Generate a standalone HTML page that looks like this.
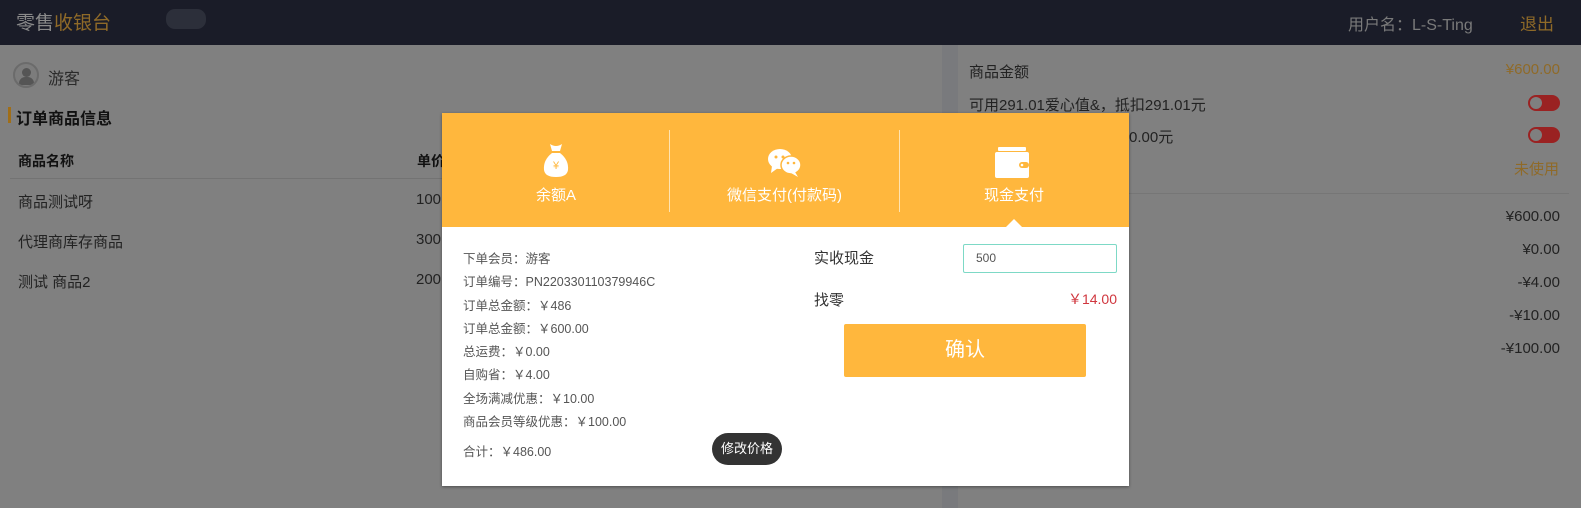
<!DOCTYPE html>
<html><head><meta charset="utf-8"><style>
*{margin:0;padding:0;box-sizing:border-box}
body{width:1581px;height:508px;overflow:hidden;background:#808080;font-family:"Liberation Sans","Noto Sans CJK SC",sans-serif;position:relative}
.a{position:absolute;white-space:nowrap}
.hdr{position:absolute;left:0;top:0;width:1581px;height:45px;background:#1a1c28}
.t{font-size:15px;color:#222}
.r{text-align:right}
</style></head><body>
<div class="hdr"></div>
<div class="a" style="left:16px;top:8px;font-size:19px;color:#8a8a8a">零售<span style="color:#8f6a28">收银台</span></div>
<div class="a" style="left:166px;top:9px;width:40px;height:20px;border-radius:9px;background:#2c2f3a"></div>
<div class="a" style="left:1348px;top:11px;font-size:16px;color:#7a7a7a">用户名：L-S-Ting</div>
<div class="a" style="left:1520px;top:10px;font-size:17px;color:#8f6a28">退出</div>
<!-- strip -->
<div class="a" style="left:942px;top:45px;width:16px;height:463px;background:#797a7d"></div>
<!-- left -->
<div class="a" style="left:13px;top:62px;width:26px;height:26px;border-radius:50%;border:2px solid #6b6b6b;background:#7c7c7c;overflow:hidden">
<div style="position:absolute;left:7px;top:4px;width:9px;height:9px;border-radius:50%;background:#555"></div>
<div style="position:absolute;left:4px;top:13px;width:15px;height:8px;border-radius:7px 7px 2px 2px;background:#555"></div></div>
<div class="a" style="left:48px;top:65px;font-size:16px;color:#2a2a2a">游客</div>
<div class="a" style="left:8px;top:107px;width:3px;height:16px;background:#a06e18"></div>
<div class="a" style="left:16px;top:105px;font-size:16px;font-weight:bold;color:#111">订单商品信息</div>
<div class="a" style="left:18px;top:151px;font-size:14px;font-weight:bold;color:#111">商品名称</div>
<div class="a" style="left:417px;top:151px;font-size:14px;font-weight:bold;color:#111">单价</div>
<div class="a" style="left:10px;top:178px;width:440px;height:1px;background:#737373"></div>
<div class="a t" style="left:18px;top:191px">商品测试呀</div><div class="a t" style="left:416px;top:191px">100</div>
<div class="a t" style="left:18px;top:231px">代理商库存商品</div><div class="a t" style="left:416px;top:231px">300</div>
<div class="a t" style="left:18px;top:271px">测试 商品2</div><div class="a t" style="left:416px;top:271px">200</div>
<!-- right -->
<div class="a" style="left:969px;top:61px;font-size:15px;color:#222">商品金额</div>
<div class="a" style="left:1500px;top:61px;font-size:15px;color:#8f6a28;width:60px;text-align:right">¥600.00</div>
<div class="a" style="left:969px;top:94px;font-size:15px;color:#222">可用291.01爱心值&amp;，抵扣291.01元</div>
<div class="a" style="left:1129px;top:126px;font-size:15px;color:#222">0.00元</div>
<div class="a" style="left:1528px;top:95px;width:32px;height:16px;border-radius:8px;background:#9a2222"><div style="position:absolute;left:2px;top:2px;width:12px;height:12px;border-radius:50%;background:#7f7f7f"></div></div>
<div class="a" style="left:1528px;top:127px;width:32px;height:16px;border-radius:8px;background:#9a2222"><div style="position:absolute;left:2px;top:2px;width:12px;height:12px;border-radius:50%;background:#7f7f7f"></div></div>
<div class="a" style="left:1514px;top:158px;font-size:15px;color:#8f6a28">未使用</div>
<div class="a" style="left:1129px;top:193px;width:440px;height:1px;background:#767676"></div>
<div class="a r" style="left:1460px;top:208px;width:100px;font-size:15px;color:#222">¥600.00</div>
<div class="a r" style="left:1460px;top:241px;width:100px;font-size:15px;color:#222">¥0.00</div>
<div class="a r" style="left:1460px;top:274px;width:100px;font-size:15px;color:#222">-¥4.00</div>
<div class="a r" style="left:1460px;top:307px;width:100px;font-size:15px;color:#222">-¥10.00</div>
<div class="a r" style="left:1460px;top:340px;width:100px;font-size:15px;color:#222">-¥100.00</div>
<!-- modal -->
<div class="a" style="left:442px;top:113px;width:687px;height:373px;background:#fff;box-shadow:0 1px 3px rgba(0,0,0,.4)"></div>
<div class="a" style="left:442px;top:113px;width:687px;height:114px;background:#ffb73d"></div>
<div class="a" style="left:669px;top:130px;width:1px;height:82px;background:#ffe3b0"></div>
<div class="a" style="left:899px;top:130px;width:1px;height:82px;background:#ffe3b0"></div>
<div class="a" style="left:1006px;top:219px;width:0;height:0;border-left:8px solid transparent;border-right:8px solid transparent;border-bottom:8px solid #fff"></div>
<!-- icons -->
<svg class="a" style="left:541px;top:142px" width="30" height="36" viewBox="0 0 30 36"><path d="M9 2 Q15 6 21 2 L19 9 L11 9 Z" fill="#fff"/><path d="M11 11 L19 11 Q28 18 27 28 Q26 35 15 35 Q4 35 3 28 Q2 18 11 11Z" fill="#fff"/><text x="15" y="27" font-size="11" fill="#ffb73d" text-anchor="middle" font-family="Liberation Sans">¥</text></svg>
<svg class="a" style="left:767px;top:148px" width="36" height="30" viewBox="0 0 36 30"><ellipse cx="13" cy="11" rx="12" ry="10" fill="#fff"/><path d="M5 18 L4 25 L11 20Z" fill="#fff"/><ellipse cx="24" cy="17" rx="10" ry="9" fill="#fff" stroke="#ffb73d" stroke-width="1.5"/><path d="M28 24 L31 29 L24 25Z" fill="#fff"/><circle cx="9" cy="9" r="1.5" fill="#ffb73d"/><circle cx="16" cy="9" r="1.5" fill="#ffb73d"/><circle cx="21" cy="15" r="1.3" fill="#ffb73d"/><circle cx="27" cy="15" r="1.3" fill="#ffb73d"/></svg>
<svg class="a" style="left:995px;top:146px" width="34" height="32" viewBox="0 0 34 32"><rect x="3" y="1" width="28" height="4" rx="1" fill="#fff"/><rect x="0" y="6" width="34" height="26" rx="2" fill="#fff"/><rect x="24" y="16" width="10" height="6" rx="3" fill="#ffb73d"/><circle cx="27" cy="19" r="1.3" fill="#fff"/></svg>
<div class="a" style="left:442px;top:184px;width:228px;text-align:center;font-size:15px;color:#fff">余额A</div>
<div class="a" style="left:670px;top:184px;width:229px;text-align:center;font-size:15px;color:#fff">微信支付(付款码)</div>
<div class="a" style="left:899px;top:184px;width:230px;text-align:center;font-size:15px;color:#fff">现金支付</div>
<!-- details -->
<div class="a" style="left:463px;top:248px;font-size:12.5px;color:#555;line-height:23.3px">下单会员：游客<br>订单编号：PN220330110379946C<br>订单总金额：￥486<br>订单总金额：￥600.00<br>总运费：￥0.00<br>自购省：￥4.00<br>全场满减优惠：￥10.00<br>商品会员等级优惠：￥100.00</div>
<div class="a" style="left:463px;top:441px;font-size:12.5px;color:#555">合计：￥486.00</div>
<div class="a" style="left:712px;top:433px;width:70px;height:32px;border-radius:16px;background:#333;color:#fff;font-size:13px;text-align:center;line-height:32px">修改价格</div>
<div class="a" style="left:814px;top:247px;font-size:15px;color:#333">实收现金</div>
<div class="a" style="left:963px;top:244px;width:154px;height:29px;border:1px solid #7dd9c6;border-radius:2px;font-size:12px;color:#555;padding-left:12px;line-height:27px">500</div>
<div class="a" style="left:814px;top:289px;font-size:15px;color:#333">找零</div>
<div class="a r" style="left:1017px;top:289px;width:100px;font-size:14px;color:#d0363e">￥14.00</div>
<div class="a" style="left:844px;top:324px;width:242px;height:53px;background:#ffb73d;border-radius:2px;color:#fff;font-size:20px;text-align:center;line-height:53px">确认</div>
</body></html>
